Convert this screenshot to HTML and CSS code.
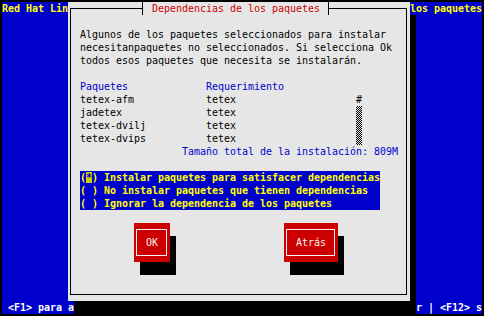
FILE: index.html
```html
<!DOCTYPE html>
<html lang="es">
<head>
    <meta charset="UTF-8">
    <title>Dependencias de los paquetes</title>
    <link rel="stylesheet" href="styles.css">
</head>
<body>

<div class="screen">
    <div class="root-left">Red Hat Lin</div>
    <div class="root-right">los paquetes</div>

    <div class="dialog">
        <div class="frame"></div>
        <div class="title">Dependencias de los paquetes</div>

        <p class="intro">Algunos de los paquetes seleccionados para instalar
necesitanpaquetes no seleccionados. Si selecciona Ok
todos esos paquetes que necesita se instalarán.</p>

        <div class="pkgs">
            <div class="name head">Paquetes</div>
            <div class="req head">Requerimiento</div>
            <div class="name">tetex-afm</div>
            <div class="req">tetex</div>
            <div class="name">jadetex</div>
            <div class="req">tetex</div>
            <div class="name">tetex-dvilj</div>
            <div class="req">tetex</div>
            <div class="name">tetex-dvips</div>
            <div class="req">tetex</div>
            <div class="scroll">
                <div class="thumb">#</div>
                <div class="track"></div>
            </div>
        </div>

        <div class="total">Tamaño total de la instalación: 809M</div>

        <div class="radios">
            <div>(<span class="cur">*</span>) Instalar paquetes para satisfacer dependencias</div>
            <div>( ) No instalar paquetes que tienen dependencias</div>
            <div>( ) Ignorar la dependencia de los paquetes</div>
        </div>

        <button class="btn ok"><span>OK</span></button>
        <button class="btn back"><span>Atrás</span></button>
    </div>

    <div class="help-left"> &lt;F1&gt; para a</div>
    <div class="help-right">r | &lt;F12&gt; s</div>
</div>

</body>
</html>
```

FILE: styles.css
```css
body {
    margin: 0;
    background-color: #000;
    font: 10px/13px "DejaVu Sans Mono", monospace;
}

.screen {
    margin: 2px;
    width: 480px;
    height: 312px;
    background-color: #0000cc;
    display: grid;
    grid-template-columns: repeat(80, 6px);
    grid-template-rows: repeat(24, 13px);
    white-space: pre;
    letter-spacing: -0.02px;
}

.root-left,
.root-right {
    grid-row: 1;
    color: #ffff00;
    font-weight: bold;
}

.root-left {
    grid-column: 1 / span 11;
}

.root-right {
    grid-column: 69 / span 12;
}

.help-left,
.help-right {
    grid-row: 24;
    color: #fff;
    font-weight: bold;
}

.help-left {
    grid-column: 1 / span 12;
}

.help-right {
    grid-column: 70 / span 11;
}

.dialog {
    grid-row: 1 / span 23;
    grid-column: 12 / span 57;
    display: grid;
    grid-template-columns: repeat(57, 6px);
    grid-template-rows: repeat(23, 13px);
    background-color: #e6e6e6;
    color: #000;
    box-shadow: 6px 13px 0 #000;
}

.frame {
    grid-row: 1 / -1;
    grid-column: 1 / -1;
    margin: 6px 3px 6px 2px;
    border: 1px solid #000;
}

.title {
    grid-row: 1;
    grid-column: 13 / span 32;
    margin: 0 3px 0 2px;
    padding-left: 9px;
    border-left: 1px solid #000;
    border-right: 1px solid #000;
    background-color: #e6e6e6;
    color: #cc0000;
}

.intro {
    grid-row: 3 / span 3;
    grid-column: 3 / -3;
    margin: 0;
}

.pkgs {
    grid-row: 7 / span 5;
    grid-column: 3 / span 47;
    display: grid;
    grid-template-columns: 126px 150px 6px;
    grid-auto-rows: 13px;
}

.name {
    grid-column: 1;
}

.req {
    grid-column: 2;
}

.head {
    color: #0000cc;
}

.scroll {
    grid-column: 3;
    grid-row: 2 / span 4;
    display: flex;
    flex-direction: column;
}

.thumb {
    height: 13px;
}

.track {
    flex: 1;
    background: repeating-conic-gradient(#000 0 25%, #e6e6e6 0 50%) 0 0 / 2px 2px;
}

.total {
    grid-row: 12;
    grid-column: 20 / span 36;
    color: #0000cc;
}

.radios {
    grid-row: 14 / span 3;
    grid-column: 3 / span 50;
    display: grid;
    grid-auto-rows: 13px;
    background-color: #0000cc;
    color: #ffff00;
    font-weight: bold;
}

.cur {
    background-color: #cccc00;
    color: #0000cc;
}

.btn {
    grid-row: 18 / span 3;
    display: flex;
    box-sizing: border-box;
    width: 100%;
    height: 100%;
    margin: 0;
    padding: 6px 3px 6px 2px;
    border: none;
    background-color: #cc0000;
    box-shadow: 6px 13px 0 #000;
    color: #f2f2f2;
    font: inherit;
    letter-spacing: inherit;
    cursor: pointer;
}

.btn span {
    flex: 1;
    padding: 6px 0 0 9px;
    border: 1px solid #f2f2f2;
    text-align: left;
}

.btn.ok {
    grid-column: 12 / span 6;
}

.btn.back {
    grid-column: 37 / span 9;
}
```
